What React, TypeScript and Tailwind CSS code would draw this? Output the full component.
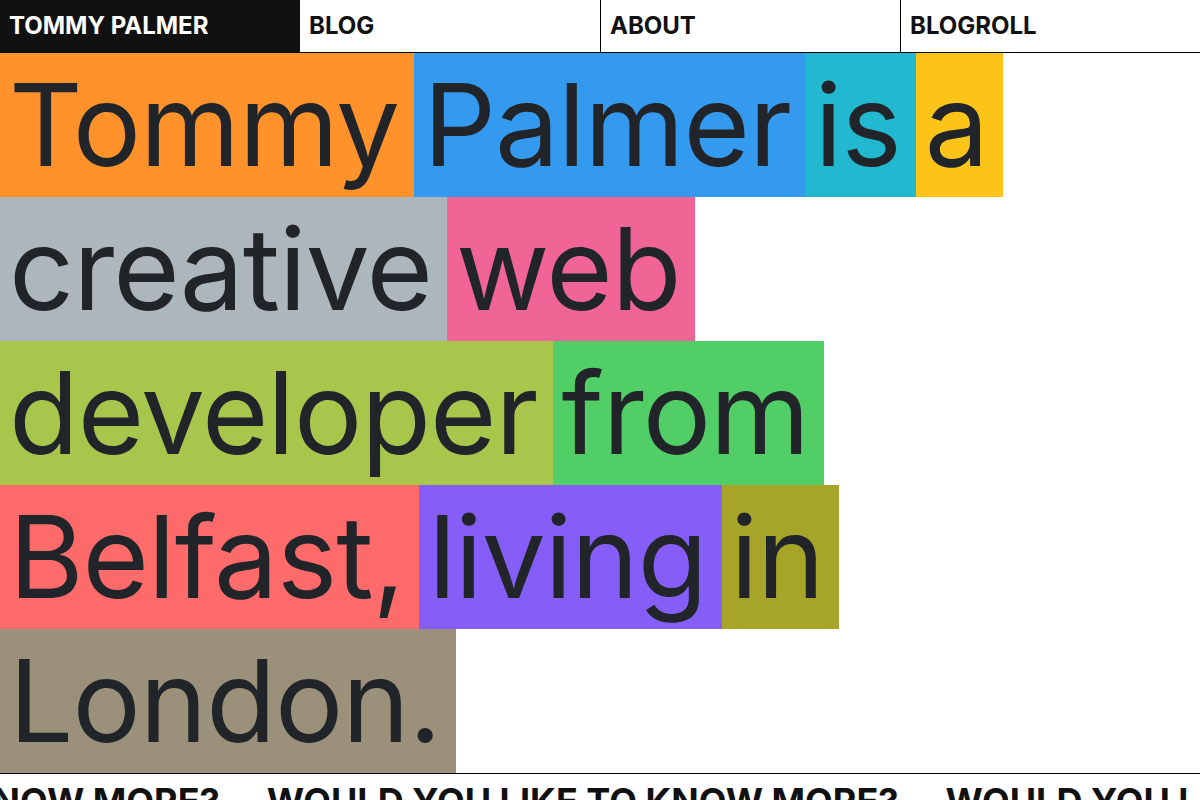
const nav = ['Blog', 'About', 'Blogroll'];

// each line of the intro, word + its tile colour
const lines: { text: string; bg: string }[][] = [
  [
    { text: 'Tommy', bg: 'bg-[#ff922b]' },
    { text: 'Palmer', bg: 'bg-[#339af0]' },
    { text: 'is', bg: 'bg-[#22b8cf]' },
    { text: 'a', bg: 'bg-[#fcc419]' },
  ],
  [
    { text: 'creative', bg: 'bg-[#adb5bd]' },
    { text: 'web', bg: 'bg-[#f06595]' },
  ],
  [
    { text: 'developer', bg: 'bg-[#a8c64b]' },
    { text: 'from', bg: 'bg-[#51cf66]' },
  ],
  [
    { text: 'Belfast,', bg: 'bg-[#ff6b6b]' },
    { text: 'living', bg: 'bg-[#845ef7]' },
    { text: 'in', bg: 'bg-[#a6a52a]' },
  ],
  [{ text: 'London.', bg: 'bg-[#9b917a]' }],
];

export default function App() {
  return (
    <div className="min-h-screen bg-white text-[#212529] font-['Inter','Noto_Sans',sans-serif] overflow-hidden">
      <nav className="grid grid-cols-4 h-[53px] border-b border-black">
        <a className="flex items-center px-[9px] bg-[#111111] text-white text-[24px] font-bold uppercase">
          Tommy Palmer
        </a>
        {nav.map((item, i) => (
          <a
            key={item}
            className={`flex items-center px-[9px] text-[24px] font-bold uppercase text-[#111111] ${
              i > 0 ? 'border-l border-black' : ''
            }`}
          >
            {item}
          </a>
        ))}
      </nav>

      <main className="flex flex-col">
        {lines.map((line, i) => (
          <div key={i} className="flex">
            {line.map((word) => (
              <span
                key={word.text}
                className={`${word.bg} pl-[9px] pr-[15px] text-[114px] leading-[144px] tracking-[-1px] whitespace-nowrap`}
              >
                {word.text}
              </span>
            ))}
          </div>
        ))}
      </main>

      <footer className="border-t border-black overflow-hidden">
        <div className="flex gap-[47px] -ml-[412px] pt-[9px] pb-3 whitespace-nowrap text-[36px] font-bold leading-none uppercase text-[#111111]">
          {[0, 1, 2, 3].map((n) => (
            <span key={n}>Would you like to know more?</span>
          ))}
        </div>
      </footer>
    </div>
  );
}
